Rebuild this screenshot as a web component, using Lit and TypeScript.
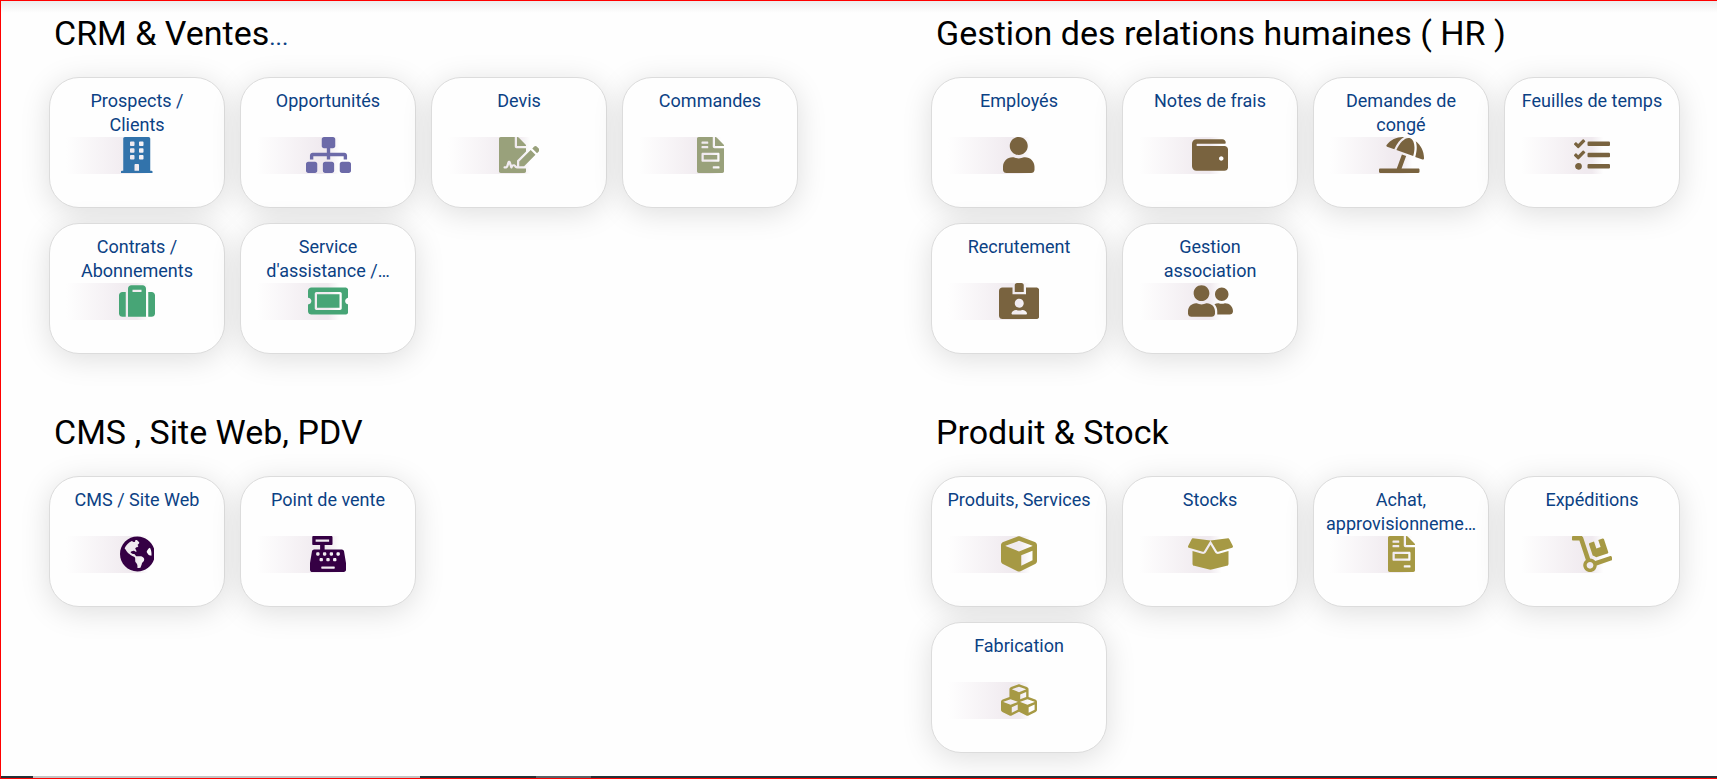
import { LitElement, html, css, svg } from "lit";
import { customElement, property } from "lit/decorators.js";

interface Glyph {
  w: number;
  d: string;
}

const icons: Record<string, Glyph> = {
  building: { w: 448, d: "M436 480h-20V24c0-13.255-10.745-24-24-24H56C42.745 0 32 10.745 32 24v456H12c-6.627 0-12 5.373-12 12v20h448v-20c0-6.627-5.373-12-12-12zM128 76c0-6.627 5.373-12 12-12h40c6.627 0 12 5.373 12 12v40c0 6.627-5.373 12-12 12h-40c-6.627 0-12-5.373-12-12V76zm0 96c0-6.627 5.373-12 12-12h40c6.627 0 12 5.373 12 12v40c0 6.627-5.373 12-12 12h-40c-6.627 0-12-5.373-12-12v-40zm52 148h-40c-6.627 0-12-5.373-12-12v-40c0-6.627 5.373-12 12-12h40c6.627 0 12 5.373 12 12v40c0 6.627-5.373 12-12 12zm76 160h-64v-84c0-6.627 5.373-12 12-12h40c6.627 0 12 5.373 12 12v84zm64-172c0 6.627-5.373 12-12 12h-40c-6.627 0-12-5.373-12-12v-40c0-6.627 5.373-12 12-12h40c6.627 0 12 5.373 12 12v40zm0-96c0 6.627-5.373 12-12 12h-40c-6.627 0-12-5.373-12-12v-40c0-6.627 5.373-12 12-12h40c6.627 0 12 5.373 12 12v40zm0-96c0 6.627-5.373 12-12 12h-40c-6.627 0-12-5.373-12-12V76c0-6.627 5.373-12 12-12h40c6.627 0 12 5.373 12 12v40z" },
  sitemap: { w: 640, d: "M128 352H32c-17.67 0-32 14.33-32 32v96c0 17.67 14.33 32 32 32h96c17.67 0 32-14.33 32-32v-96c0-17.67-14.33-32-32-32zm-24-80h192v48h48v-48h192v48h48v-57.59c0-21.17-17.23-38.41-38.41-38.41H344v-64h40c17.67 0 32-14.33 32-32V32c0-17.67-14.33-32-32-32H256c-17.67 0-32 14.33-32 32v96c0 17.67 14.33 32 32 32h40v64H94.41C73.23 224 56 241.23 56 262.41V320h48v-48zm264 80h-96c-17.67 0-32 14.33-32 32v96c0 17.67 14.33 32 32 32h96c17.67 0 32-14.33 32-32v-96c0-17.67-14.33-32-32-32zm240 0h-96c-17.67 0-32 14.33-32 32v96c0 17.67 14.33 32 32 32h96c17.67 0 32-14.33 32-32v-96c0-17.67-14.33-32-32-32z" },
  signature: { w: 576, d: "M218.17 424.14c-2.95-5.92-8.09-6.52-10.17-6.52s-7.22.59-10.02 6.19l-7.67 15.34c-6.37 12.78-25.03 11.37-29.48-2.09L144 386.59l-10.61 31.88c-5.89 17.66-22.38 29.53-41 29.53H80c-8.84 0-16-7.16-16-16s7.16-16 16-16h12.39c4.83 0 9.11-3.08 10.64-7.66l18.19-54.64c3.3-9.81 12.44-16.41 22.78-16.41s19.48 6.59 22.77 16.41l13.88 41.64c19.75-16.19 54.06-9.7 66 14.16 1.89 3.78 5.49 5.95 9.36 6.26v-82.12l128-127.09V160H248c-13.2 0-24-10.8-24-24V0H24C10.7 0 0 10.7 0 24v464c0 13.3 10.7 24 24 24h336c13.3 0 24-10.7 24-24v-40l-128-.11c-16.12-.31-30.58-9.28-37.83-23.75zM384 121.9c0-6.3-2.5-12.4-7-16.9L279.1 7c-4.5-4.5-10.6-7-17-7H256v128h128v-6.1zm-96 225.06V416h68.99l161.68-162.78-67.88-67.88L288 346.96zm280.54-179.63l-31.87-31.87c-9.94-9.94-26.07-9.94-36.01 0l-27.25 27.25 67.88 67.88 27.25-27.25c9.95-9.94 9.95-26.07 0-36.01z" },
  invoice: { w: 384, d: "M288 256H96v64h192v-64zm89-151L279.1 7c-4.5-4.5-10.6-7-17-7H256v128h128v-6.1c0-6.3-2.5-12.4-7-16.9zm-153 31V0H24C10.7 0 0 10.7 0 24v464c0 13.3 10.7 24 24 24h336c13.3 0 24-10.7 24-24V160H248c-13.2 0-24-10.8-24-24zM64 72c0-4.42 3.58-8 8-8h80c4.42 0 8 3.58 8 8v16c0 4.42-3.58 8-8 8H72c-4.42 0-8-3.58-8-8V72zm0 64c0-4.42 3.58-8 8-8h80c4.42 0 8 3.58 8 8v16c0 4.42-3.58 8-8 8H72c-4.42 0-8-3.58-8-8v-16zm256 304c0 4.42-3.58 8-8 8h-80c-4.42 0-8-3.58-8-8v-16c0-4.42 3.58-8 8-8h80c4.42 0 8 3.58 8 8v16zm0-200v96c0 8.84-7.16 16-16 16H80c-8.84 0-16-7.16-16-16v-96c0-8.84 7.16-16 16-16h224c8.84 0 16 7.16 16 16z" },
  suitcase: { w: 512, d: "M128 480h256V80c0-26.5-21.5-48-48-48H176c-26.5 0-48 21.5-48 48v400zm64-384h128v32H192V96zm320 80v256c0 26.5-21.5 48-48 48h-48V128h48c26.5 0 48 21.5 48 48zM96 480H48c-26.5 0-48-21.5-48-48V176c0-26.5 21.5-48 48-48h48v352z" },
  ticket: { w: 576, d: "M128 160h320v192H128V160zm400 96c0 26.51 21.49 48 48 48v96c0 26.51-21.49 48-48 48H48c-26.51 0-48-21.49-48-48v-96c26.51 0 48-21.49 48-48s-21.49-48-48-48v-96c0-26.51 21.49-48 48-48h480c26.51 0 48 21.49 48 48v96c-26.51 0-48 21.49-48 48zm-48-104c0-13.255-10.745-24-24-24H120c-13.255 0-24 10.745-24 24v208c0 13.255 10.745 24 24 24h336c13.255 0 24-10.745 24-24V152z" },
  user: { w: 448, d: "M224 256c70.7 0 128-57.3 128-128S294.7 0 224 0 96 57.3 96 128s57.3 128 128 128zm89.6 32h-16.7c-22.2 10.2-46.9 16-72.9 16s-50.6-5.8-72.9-16h-16.7C60.2 288 0 348.2 0 422.4V464c0 26.5 21.5 48 48 48h352c26.5 0 48-21.5 48-48v-41.6c0-74.2-60.2-134.4-134.4-134.4z" },
  wallet: { w: 512, d: "M461.2 128H80c-8.84 0-16-7.16-16-16s7.16-16 16-16h384c8.84 0 16-7.16 16-16 0-26.51-21.49-48-48-48H64C28.65 32 0 60.65 0 96v320c0 35.35 28.65 64 64 64h397.2c28.02 0 50.8-21.53 50.8-48V176c0-26.47-22.78-48-50.8-48zM416 336c-17.67 0-32-14.33-32-32s14.33-32 32-32 32 14.33 32 32-14.33 32-32 32z" },
  beach: { w: 640, d: "M115.38 136.9l102.11 37.18c35.19-81.54 86.21-144.29 139-173.7-95.88-4.89-188.78 36.96-248.53 111.8-6.69 8.4-2.66 21.05 7.42 24.72zm132.25 48.16l238.48 86.83c35.76-121.38 18.7-231.66-42.63-253.98-7.4-2.7-15.13-4-23.09-4-58.02.01-128.27 69.17-172.76 171.15zM521.48 60.5c6.22 16.3 10.83 34.6 13.2 55.19 5.74 49.89-1.42 108.23-18.95 166.98l102.62 37.36c10.09 3.67 21.31-3.43 21.57-14.17 2.32-95.69-41.91-187.44-118.44-245.36zM560 447.98H321.06L386 269.5l-60.14-21.9-72.9 200.37H16c-8.84 0-16 7.16-16 16.01v32.01C0 504.83 7.16 512 16 512h544c8.84 0 16-7.17 16-16.01v-32.01c0-8.84-7.16-16-16-16z" },
  tasks: { w: 512, d: "M139.61 35.5a12 12 0 0 0-17 0L58.93 98.81l-22.7-22.12a12 12 0 0 0-17 0L3.53 92.41a12 12 0 0 0 0 17l47.59 47.4a12.78 12.78 0 0 0 17.61 0l15.59-15.62L156.52 69a12.09 12.09 0 0 0 .09-17zm0 159.19a12 12 0 0 0-17 0l-63.68 63.72-22.7-22.1a12 12 0 0 0-17 0L3.53 252a12 12 0 0 0 0 17L51 316.5a12.77 12.77 0 0 0 17.6 0l15.7-15.69 72.2-72.22a12 12 0 0 0 .09-16.9zM64 368c-26.49 0-48.59 21.5-48.59 48S37.53 464 64 464a48 48 0 0 0 0-96zm432 16H208a16 16 0 0 0-16 16v32a16 16 0 0 0 16 16h288a16 16 0 0 0 16-16v-32a16 16 0 0 0-16-16zm0-320H208a16 16 0 0 0-16 16v32a16 16 0 0 0 16 16h288a16 16 0 0 0 16-16V80a16 16 0 0 0-16-16zm0 160H208a16 16 0 0 0-16 16v32a16 16 0 0 0 16 16h288a16 16 0 0 0 16-16v-32a16 16 0 0 0-16-16z" },
  badge: { w: 576, d: "M528 64H384v96H192V64H48C21.5 64 0 85.5 0 112v352c0 26.5 21.5 48 48 48h480c26.5 0 48-21.5 48-48V112c0-26.5-21.5-48-48-48zM288 224c35.3 0 64 28.7 64 64s-28.7 64-64 64-64-28.7-64-64 28.7-64 64-64zm93.3 224H194.7c-10.4 0-18.8-10-15.6-19.8 8.3-25.6 32.4-44.2 60.9-44.2h8.2c12.3 5.1 25.7 8 39.8 8s27.6-2.9 39.8-8h8.2c28.4 0 52.5 18.5 60.9 44.2 3.2 9.9-5.2 19.8-15.6 19.8zM352 32c0-17.7-14.3-32-32-32h-64c-17.7 0-32 14.3-32 32v96h128V32z" },
  friends: { w: 640, d: "M192 256c61.9 0 112-50.1 112-112S253.9 32 192 32 80 82.1 80 144s50.1 112 112 112zm76.8 32h-8.3c-20.8 10-43.9 16-68.5 16s-47.6-6-68.5-16h-8.3C51.6 288 0 339.6 0 403.2V432c0 26.5 21.5 48 48 48h288c26.5 0 48-21.5 48-48v-28.8c0-63.6-51.6-115.2-115.2-115.2zM480 256c53 0 96-43 96-96s-43-96-96-96-96 43-96 96 43 96 96 96zm48 32h-3.8c-13.9 4.8-28.6 8-44.2 8s-30.3-3.2-44.2-8H432c-20.4 0-39.2 5.9-55.7 15.4 24.4 26.3 39.7 61.2 39.7 99.8v38.4c0 2.2-.5 4.3-.6 6.4H592c26.5 0 48-21.5 48-48 0-61.9-50.1-112-112-112z" },
  globe: { w: 496, d: "M248 8C111.03 8 0 119.03 0 256s111.03 248 248 248 248-111.03 248-248S384.97 8 248 8zm82.29 357.6c-3.9 3.88-7.99 7.95-11.31 11.28-2.99 3-5.1 6.7-6.17 10.71-1.51 5.66-2.73 11.38-4.77 16.87l-17.39 46.85c-13.76 3-28 4.69-42.65 4.69v-27.38c1.69-12.62-7.64-36.26-22.63-51.25-6-6-9.37-14.14-9.37-22.63v-32.01c0-11.64-6.27-22.34-16.46-27.97-14.37-7.95-34.81-19.06-48.81-26.11-11.48-5.78-22.1-13.14-31.65-21.75l-.8-.72a114.792 114.792 0 0 1-18.06-20.74c-9.38-13.77-24.66-36.42-34.59-51.14 20.47-45.5 57.36-82.04 103.2-101.89l24.01 12.01C203.48 89.74 216 82.01 216 70.11v-11.3c7.99-1.29 16.12-2.11 24.39-2.42l28.3 28.3c6.25 6.25 6.25 16.38 0 22.63L264 112l-10.34 10.34c-3.12 3.12-3.12 8.19 0 11.31l4.69 4.69c3.12 3.12 3.12 8.19 0 11.31l-8 8a8.008 8.008 0 0 1-5.66 2.34h-8.99c-2.08 0-4.08.81-5.58 2.27l-9.92 9.65a8.008 8.008 0 0 0-1.58 9.31l15.59 31.19c2.66 5.32-1.21 11.58-7.15 11.58h-5.64c-1.93 0-3.79-.7-5.24-1.96l-9.28-8.06a16.017 16.017 0 0 0-15.55-3.1l-31.17 10.39a11.95 11.95 0 0 0-8.17 11.34c0 4.53 2.56 8.66 6.61 10.69l11.08 5.54c9.41 4.71 19.79 7.16 30.31 7.16s22.59 27.29 32 32h66.75c8.49 0 16.62 3.37 22.63 9.37l13.69 13.69a30.503 30.503 0 0 1 8.93 21.57 46.536 46.536 0 0 1-13.72 32.98zM417 274.25c-5.79-1.45-10.84-5-14.15-9.97l-17.98-26.97a23.97 23.97 0 0 1 0-26.62l19.59-29.38c2.32-3.47 5.5-6.29 9.24-8.15l12.98-6.49C440.2 193.59 448 223.87 448 256c0 8.67-.74 17.16-1.82 25.54L417 274.25z" },
  register: { w: 512, d: "M511.1 378.8l-26.7-160c-2.6-15.4-15.9-26.7-31.6-26.7H208v-64h96c8.8 0 16-7.2 16-16V16c0-8.8-7.2-16-16-16H48c-8.8 0-16 7.2-16 16v96c0 8.8 7.2 16 16 16h96v64H59.1c-15.6 0-29 11.3-31.6 26.7L.8 378.7c-.6 3.5-.9 7-.9 10.5V480c0 17.7 14.3 32 32 32h448c17.7 0 32-14.3 32-32v-90.7c.1-3.5-.2-7-.8-10.5zM280 248c0-8.8 7.2-16 16-16h16c8.8 0 16 7.2 16 16v16c0 8.8-7.2 16-16 16h-16c-8.8 0-16-7.2-16-16v-16zm-32 64h16c8.8 0 16 7.2 16 16v16c0 8.8-7.2 16-16 16h-16c-8.8 0-16-7.2-16-16v-16c0-8.8 7.2-16 16-16zm-32-80c8.8 0 16 7.2 16 16v16c0 8.8-7.2 16-16 16h-16c-8.8 0-16-7.2-16-16v-16c0-8.8 7.2-16 16-16h16zM80 80V48h192v32H80zm40 200h-16c-8.8 0-16-7.2-16-16v-16c0-8.8 7.2-16 16-16h16c8.8 0 16 7.2 16 16v16c0 8.8-7.2 16-16 16zm16 64v-16c0-8.8 7.2-16 16-16h16c8.8 0 16 7.2 16 16v16c0 8.8-7.2 16-16 16h-16c-8.8 0-16-7.2-16-16zm216 112c0 4.4-3.6 8-8 8H168c-4.4 0-8-3.6-8-8v-16c0-4.4 3.6-8 8-8h176c4.4 0 8 3.6 8 8v16zm24-112c0 8.8-7.2 16-16 16h-16c-8.8 0-16-7.2-16-16v-16c0-8.8 7.2-16 16-16h16c8.8 0 16 7.2 16 16v16zm48-80c0 8.8-7.2 16-16 16h-16c-8.8 0-16-7.2-16-16v-16c0-8.8 7.2-16 16-16h16c8.8 0 16 7.2 16 16v16z" },
  cube: { w: 512, d: "M239.1 6.3l-208 78c-18.7 7-31.1 25-31.1 45v225.1c0 18.2 10.3 34.8 26.5 42.9l208 104c13.5 6.8 29.4 6.8 42.9 0l208-104c16.3-8.1 26.5-24.8 26.5-42.9V129.3c0-20-12.4-37.9-31.1-44.9l-208-78C262 2.2 250 2.2 239.1 6.3zM256 68.4l192 72v1.1l-192 78-192-78v-1.1l192-72zm32 356V275.5l160-65v133.9l-160 80z" },
  box: { w: 640, d: "M425.7 256c-16.9 0-32.8-9-41.4-23.4L320 126l-64.2 106.6c-8.7 14.5-24.6 23.5-41.5 23.5-4.5 0-9-.6-13.3-1.9L64 215v178c0 14.7 10 27.5 24.2 31l216.2 54.1c10.2 2.5 20.9 2.5 31 0L551.8 424c14.2-3.6 24.2-16.4 24.2-31V215l-137 39.1c-4.3 1.3-8.8 1.9-13.3 1.9zm212.6-112.2L586.8 41c-3.1-6.2-9.8-9.8-16.7-8.9L320 64l91.7 152.1c3.8 6.3 11.4 9.3 18.5 7.3l197.9-56.5c9.9-2.9 14.7-13.9 10.2-23.1zM53.2 41L1.7 143.8c-4.6 9.2.3 20.2 10.1 23l197.9 56.5c7.1 2 14.7-1 18.5-7.3L320 64 69.8 32.1c-6.9-.8-13.5 2.7-16.6 8.9z" },
  dolly: { w: 576, d: "M294.2 277.7c18 5 34.7 13.4 49.5 24.7l161.5-53.8c8.4-2.8 12.9-11.9 10.1-20.2L454.9 47.2c-2.8-8.4-11.9-12.9-20.2-10.1l-61.1 20.4 33.1 99.4L346 177l-33.1-99.4-61.6 20.5c-8.4 2.8-12.9 11.9-10.1 20.2l53 159.4zm281 48.7L565 296c-2.8-8.4-11.9-12.9-20.2-10.1l-213.5 71.2c-17.2-22-43.6-36.4-73.5-37L158.4 21.9C154 8.8 141.8 0 128 0H16C7.2 0 0 7.2 0 16v32c0 8.8 7.2 16 16 16h88.9l92.2 276.7c-26.1 20.4-41.7 53.6-36 90.5 6.1 39.4 37.9 72.3 77.3 79.2 60.2 10.7 112.3-34.8 113.4-92.6l213.3-71.2c8.3-2.8 12.9-11.8 10.1-20.2zM256 464c-26.5 0-48-21.5-48-48s21.5-48 48-48 48 21.5 48 48-21.5 48-48 48z" },
  cubes: { w: 512, d: "M488.6 250.2L392 214V105.5c0-15-9.3-28.4-23.4-33.7l-100-37.5c-8.1-3.1-17.1-3.1-25.3 0l-100 37.5c-14.1 5.3-23.4 18.7-23.4 33.7V214l-96.6 36.2C9.3 255.5 0 268.9 0 283.9V394c0 13.6 7.7 26.1 19.9 32.2l100 50c10.1 5.1 22.1 5.1 32.2 0l103.9-52 103.9 52c10.1 5.1 22.1 5.1 32.2 0l100-50c12.2-6.1 19.9-18.6 19.9-32.2V283.9c0-15-9.3-28.4-23.4-33.7zM358 214.8l-85 31.9v-68.2l85-37v73.3zM154 104.1l102-38.2 102 38.2v.6l-102 41.4-102-41.4v-.6zm84 291.1l-85 42.5v-79.1l85-38.8v75.4zm0-112l-102 41.4-102-41.4v-.6l102-38.2 102 38.2v.6zm240 112l-85 42.5v-79.1l85-38.8v75.4zm0-112l-102 41.4-102-41.4v-.6l102-38.2 102 38.2v.6z" },
};

interface Tile {
  label: string;
  icon: string;
  tone: string;
}

interface Section {
  title: string;
  more?: boolean;
  tiles: Tile[];
}

const tile = (label: string, icon: string, tone: string): Tile => ({ label, icon, tone });

const sections: Section[] = [
  {
    title: "CRM & Ventes",
    more: true,
    tiles: [
      tile("Prospects / Clients", "building", "blue"),
      tile("Opportunités", "sitemap", "violet"),
      tile("Devis", "signature", "sage"),
      tile("Commandes", "invoice", "sage"),
      tile("Contrats / Abonnements", "suitcase", "green"),
      tile("Service d'assistance /…", "ticket", "green"),
    ],
  },
  {
    title: "Gestion des relations humaines ( HR )",
    tiles: [
      tile("Employés", "user", "brown"),
      tile("Notes de frais", "wallet", "brown"),
      tile("Demandes de congé", "beach", "brown"),
      tile("Feuilles de temps", "tasks", "brown"),
      tile("Recrutement", "badge", "brown"),
      tile("Gestion association", "friends", "brown"),
    ],
  },
  {
    title: "CMS , Site Web, PDV",
    tiles: [
      tile("CMS / Site Web", "globe", "plum"),
      tile("Point de vente", "register", "plum"),
    ],
  },
  {
    title: "Produit & Stock",
    tiles: [
      tile("Produits, Services", "cube", "olive"),
      tile("Stocks", "box", "olive"),
      tile("Achat, approvisionneme…", "invoice", "olive"),
      tile("Expéditions", "dolly", "olive"),
      tile("Fabrication", "cubes", "olive"),
    ],
  },
];

@customElement("app-tile")
export class AppTile extends LitElement {
  @property() label = "";
  @property() icon = "";
  @property() tone = "";

  static styles = css`
    :host {
      display: block;
    }
    .card {
      box-sizing: border-box;
      display: flex;
      flex-direction: column;
      width: 176px;
      height: 131px;
      padding: 11px 12px;
      border: 1px solid #dcdcdc;
      border-radius: 30px;
      background: #fefefe;
      box-shadow: 0 5px 30px rgba(0, 0, 0, 0.13);
      color: #0b4184;
      font-size: 18px;
      line-height: 24px;
      text-align: center;
      text-decoration: none;
    }
    .label {
      height: 48px;
    }
    .band {
      display: flex;
      justify-content: center;
      height: 37px;
      margin: 0 4px;
      background: linear-gradient(90deg, #fefefe, #f0eaef 45%, #f0eaef 50%, #fefefe 58%);
    }
    .icon {
      height: 36px;
      fill: currentColor;
    }
    .blue { color: #3273ab; }
    .violet { color: #6c6aa8; }
    .sage { color: #99a17b; }
    .green { color: #47a576; }
    .brown { color: #79633f; }
    .plum { color: #350044; }
    .olive { color: #a69944; }
  `;

  render() {
    const glyph = icons[this.icon];
    return html`
      <a class="card" href="#">
        <span class="label">${this.label}</span>
        <span class="band ${this.tone}">
          <svg class="icon" viewBox="0 0 ${glyph.w} 512" aria-hidden="true">${svg`<path d=${glyph.d}></path>`}</svg>
        </span>
      </a>
    `;
  }
}

@customElement("app-root")
export class AppRoot extends LitElement {
  static styles = css`
    :host {
      display: block;
      font-family: Roboto, "Liberation Sans", sans-serif;
    }
    .page {
      box-sizing: border-box;
      display: flex;
      flex-direction: column;
      min-height: 100vh;
      border: solid #ff0000;
      border-width: 1px 0 1px 1px;
      background: linear-gradient(#ececec, #fefefe 12px);
    }
    .sections {
      flex: 1;
      display: grid;
      grid-template-columns: 1fr 1fr;
      align-content: start;
      column-gap: 96px;
      row-gap: 52px;
      padding: 6px 0 20px 48px;
    }
    .title {
      margin: 0 0 17px;
      padding: 4px 5px;
      color: #000;
      font-size: 34px;
      font-weight: 400;
      line-height: 45px;
    }
    .more {
      color: #0b4184;
      font-size: 24px;
      line-height: 24px;
      text-decoration: none;
    }
    .tiles {
      display: flex;
      flex-wrap: wrap;
      gap: 15px;
    }
    .footer {
      display: flex;
      height: 2px;
      background: #263238;
    }
    .light {
      width: 387px;
      margin: 0 116px 0 32px;
      background: #c4c4c4;
    }
    .grey {
      width: 55px;
      background: #596267;
    }
  `;

  render() {
    return html`
      <main class="page">
        <div class="sections">
          ${sections.map(
            (s) => html`
              <section>
                <h2 class="title">${s.title}${s.more ? html`<a class="more" href="#">...</a>` : ""}</h2>
                <div class="tiles">
                  ${s.tiles.map((t) => html`<app-tile .label=${t.label} .icon=${t.icon} .tone=${t.tone}></app-tile>`)}
                </div>
              </section>
            `,
          )}
        </div>
        <div class="footer">
          <div class="light"></div>
          <div class="grey"></div>
        </div>
      </main>
    `;
  }
}
